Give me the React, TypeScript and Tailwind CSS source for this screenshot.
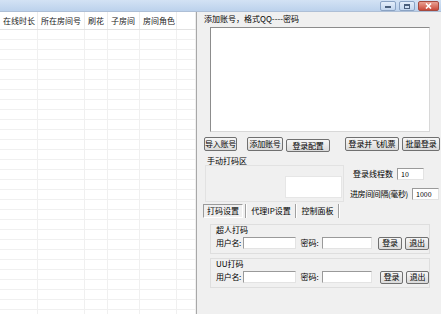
import React from "react";

const btn =
  "flex items-center justify-center border border-[#707070] rounded-[2px] bg-gradient-to-b from-[#f7f7f7] to-[#dadada] text-[8px] leading-none text-black shrink-0 whitespace-nowrap overflow-hidden tracking-[-0.2px]";
const input =
  "bg-white border border-t-[#9a9a9a] border-l-[#9a9a9a] border-r-[#e3e3e3] border-b-[#e3e3e3] shrink-0 text-[7px] leading-none flex items-center pl-[3px]";

const cols = ["w-[38px]", "w-[47px]", "w-[23px]", "w-[32px]", "w-[37px]", "flex-1"];
const heads = ["在线时长", "所在房间号", "刷花", "子房间", "房间角色", ""];

function LeftGrid() {
  const rows = Array.from({ length: 30 }, (_, i) => i);
  return (
    <div className="w-[197px] bg-white border-r border-[#a8a8a8] flex flex-col overflow-hidden shrink-0">
      <div className="h-[18px] flex border-b border-[#e2e2e2] shrink-0">
        {cols.map((c, i) => (
          <div
            key={i}
            className={`${c} border-r border-[#ececec] text-[8px] leading-[18px] pl-[3px] whitespace-nowrap overflow-hidden text-[#222]`}
          >
            {heads[i]}
          </div>
        ))}
      </div>
      {rows.map((r) => (
        <div key={r} className="h-[10px] flex border-b border-[#f0f0f0] shrink-0">
          {cols.map((c, i) => (
            <div key={i} className={`${c} border-r border-[#f0f0f0]`} />
          ))}
        </div>
      ))}
    </div>
  );
}

function Group({ title, loginGap, btnW }: { title: string; loginGap: string; btnW: string }) {
  return (
    <div className="ml-[13px] w-[220px] h-[30px] border border-[#dedede] pl-[5px] flex flex-col">
      <div className="h-[9px] leading-[9px] text-[8px]">{title}</div>
      <div className="mt-[3px] h-[12px] flex items-center">
        <div className="w-[28px] text-[8px] leading-none whitespace-nowrap tracking-[-0.3px]">用户名:</div>
        <div className={`${input} w-[53px] h-[12px]`} />
        <div className="ml-[4px] w-[22px] text-[8px] leading-none whitespace-nowrap">密码:</div>
        <div className={`${input} w-[50px] h-[12px]`} />
        <div className={`${btn} ${loginGap} ${btnW} h-[13px]`}>登录</div>
        <div className={`${btn} ml-[3px] ${btnW} h-[13px]`}>退出</div>
      </div>
    </div>
  );
}

export default function App() {
  return (
    <div className="w-[441px] h-[314px] overflow-hidden bg-[#f0f0f0] flex flex-col font-['Noto_Sans_CJK_SC',sans-serif] text-black">
      {/* title bar */}
      <div className="h-[12px] shrink-0 bg-gradient-to-b from-[#d3e2f4] to-[#bcd2ec] border-b border-[#aebfd6] flex items-start justify-end pr-[2px]">
        <div className="mt-[1px] w-[16px] h-[10px] rounded-[2px] border border-[#8aa3c4] bg-gradient-to-b from-[#e4eefa] to-[#c2d6ee] flex items-center justify-center">
          <div className="w-[6px] h-[2px] bg-[#4a5f7c] mt-[2px]" />
        </div>
        <div className="mt-[1px] ml-[3px] w-[16px] h-[10px] rounded-[2px] border border-[#8aa3c4] bg-gradient-to-b from-[#e4eefa] to-[#c2d6ee] flex items-center justify-center">
          <div className="w-[6px] h-[5px] border border-[#4a5f7c] border-t-2" />
        </div>
        <div className="mt-[1px] ml-[3px] w-[21px] h-[10px] rounded-[2px] border border-[#a44a40] bg-gradient-to-b from-[#e8a093] to-[#c9483a] flex items-center justify-center">
          <svg width="7" height="6" viewBox="0 0 7 6">
            <path d="M1 0.5 L6 5.5 M6 0.5 L1 5.5" stroke="#fff" strokeWidth="1.6" />
          </svg>
        </div>
      </div>

      <div className="flex flex-1 min-h-0">
        <LeftGrid />

        <div className="flex-1 flex flex-col">
          <div className="h-[13px] pl-[7px] text-[8px] leading-[13px] whitespace-nowrap">添加账号，格式QQ----密码</div>
          <div className="ml-[13px] mt-[2px] w-[220px] h-[105px] bg-white border border-t-[#8c8c8c] border-l-[#8c8c8c] border-r-[#d8d8d8] border-b-[#d8d8d8] shrink-0" />

          <div className="flex mt-[5px] ml-[7px] items-start shrink-0">
            <div className={`${btn} w-[33px] h-[14px]`}>导入账号</div>
            <div className={`${btn} ml-[10px] w-[36px] h-[14px]`}>添加账号</div>
            <div className={`${btn} ml-[3px] mt-[2px] w-[44px] h-[13px]`}>登录配置</div>
            <div className={`${btn} ml-[15px] w-[54px] h-[14px]`}>登录并飞机票</div>
            <div className={`${btn} ml-[3px] w-[38px] h-[14px]`}>批量登录</div>
          </div>

          <div className="flex shrink-0">
            <div className="ml-[8px] w-[139px] flex flex-col">
              <div className="mt-[4px] h-[9px] leading-[9px] text-[8px] pl-[2px]">手动打码区</div>
              <div className="h-[37px] border border-[#e2e2e2] flex">
                <div className="ml-[79px] mt-[10px] w-[57px] h-[22px] bg-white border border-[#e6e6e6]" />
              </div>
            </div>
            <div className="flex flex-col">
              <div className="mt-[16px] h-[12px] pl-[9px] flex items-center">
                <div className="w-[44px] text-[8px] leading-none whitespace-nowrap">登录线程数</div>
                <div className={`${input} w-[27px] h-[12px]`}>10</div>
              </div>
              <div className="mt-[8px] h-[12px] pl-[6px] flex items-center">
                <div className="w-[62px] text-[8px] leading-none whitespace-nowrap tracking-[-0.4px]">进房间间隔(毫秒)</div>
                <div className={`${input} w-[27px] h-[12px]`}>1000</div>
              </div>
            </div>
          </div>

          {/* tabs */}
          <div className="mt-[2px] ml-[6px] h-[14px] flex items-stretch shrink-0">
            <div className="w-[40px] border border-t-[#9a9a9a] border-l-[#9a9a9a] border-r-white border-b-white text-[8px] leading-[12px] text-center">打码设置</div>
            <div className="ml-[2px] w-[1px] bg-[#a0a0a0]" />
            <div className="w-[1px] bg-white" />
            <div className="w-[48px] text-[8px] leading-[14px] text-center">代理IP设置</div>
            <div className="w-[1px] bg-[#a0a0a0]" />
            <div className="w-[1px] bg-white" />
            <div className="w-[41px] text-[8px] leading-[14px] text-center">控制面板</div>
            <div className="w-[1px] bg-[#a0a0a0]" />
            <div className="w-[1px] bg-white" />
          </div>

          <div className="mt-[6px] shrink-0">
            <Group title="超人打码" loginGap="ml-[6px]" btnW="w-[24px]" />
          </div>
          <div className="mt-[4px] shrink-0">
            <Group title="UU打码" loginGap="ml-[8px]" btnW="w-[23px]" />
          </div>
        </div>
      </div>
    </div>
  );
}
